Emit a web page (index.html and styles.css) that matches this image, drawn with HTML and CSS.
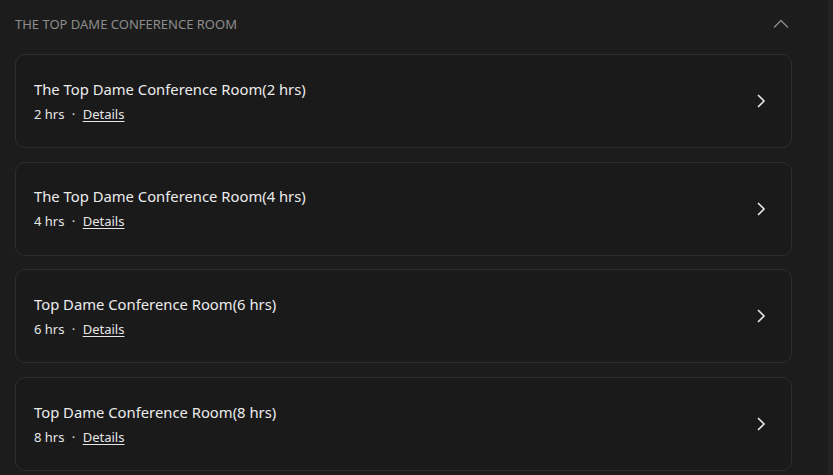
FILE: index.html
```html
<!DOCTYPE html>
<html lang="en">
<head>
  <meta charset="UTF-8">
  <meta name="viewport" content="width=device-width, initial-scale=1.0">
  <title>The Top Dame Conference Room</title>
  <link rel="stylesheet" href="styles.css">
</head>
<body>
  <div class="layout">
    <main class="panel">
      <!-- Section header -->
      <div class="section-header">
        <span class="section-title">THE TOP DAME CONFERENCE ROOM</span>
        <svg class="collapse-icon" width="16" height="10" viewBox="0 0 16 10">
          <path d="M1 8.5 L8 1.5 L15 8.5" fill="none" stroke="#8a8a8a" stroke-width="1.4"/>
        </svg>
      </div>

      <!-- Booking options -->
      <div class="option-list">
        <a class="option-card" href="#">
          <div class="option-text">
            <div class="option-name">The Top Dame Conference Room(2 hrs)</div>
            <div class="option-meta">2 hrs <span class="dot">·</span> <span class="details">Details</span></div>
          </div>
          <svg class="arrow" width="10" height="14" viewBox="0 0 10 14">
            <path d="M2 1 L8 7 L2 13" fill="none" stroke="#e6e6e6" stroke-width="1.6"/>
          </svg>
        </a>
        <a class="option-card" href="#">
          <div class="option-text">
            <div class="option-name">The Top Dame Conference Room(4 hrs)</div>
            <div class="option-meta">4 hrs <span class="dot">·</span> <span class="details">Details</span></div>
          </div>
          <svg class="arrow" width="10" height="14" viewBox="0 0 10 14">
            <path d="M2 1 L8 7 L2 13" fill="none" stroke="#e6e6e6" stroke-width="1.6"/>
          </svg>
        </a>
        <a class="option-card" href="#">
          <div class="option-text">
            <div class="option-name">Top Dame Conference Room(6 hrs)</div>
            <div class="option-meta">6 hrs <span class="dot">·</span> <span class="details">Details</span></div>
          </div>
          <svg class="arrow" width="10" height="14" viewBox="0 0 10 14">
            <path d="M2 1 L8 7 L2 13" fill="none" stroke="#e6e6e6" stroke-width="1.6"/>
          </svg>
        </a>
        <a class="option-card" href="#">
          <div class="option-text">
            <div class="option-name">Top Dame Conference Room(8 hrs)</div>
            <div class="option-meta">8 hrs <span class="dot">·</span> <span class="details">Details</span></div>
          </div>
          <svg class="arrow" width="10" height="14" viewBox="0 0 10 14">
            <path d="M2 1 L8 7 L2 13" fill="none" stroke="#e6e6e6" stroke-width="1.6"/>
          </svg>
        </a>
      </div>
    </main>
    <div class="scroll-strip"></div>
  </div>
</body>
</html>
```
FILE: styles.css
```css
body {
  margin: 0;
  background-color: #1c1c1c;
  font-family: "Noto Sans", "Open Sans", sans-serif;
  color: #e6e6e6;
  height: 475px;
  overflow: hidden;
}

.layout {
  display: flex;
  height: 100%;
}

.panel {
  flex: 1;
  padding: 0 0 0 15px;
}

.scroll-strip {
  width: 5px;
  background-color: #232323;
}

.section-header {
  display: flex;
  align-items: center;
  justify-content: space-between;
  width: 777px;
  height: 48px;
  margin-bottom: 6px;
}

.section-title {
  font-size: 13px;
  color: #8c8c8c;
}

.collapse-icon {
  margin-right: 3px;
}

.option-list {
  display: flex;
  flex-direction: column;
  gap: 13.7px;
  width: 777px;
}

.option-card {
  display: flex;
  align-items: center;
  justify-content: space-between;
  box-sizing: border-box;
  height: 94px;
  padding: 0 25px 0 18px;
  border: 1px solid #2e2e2e;
  border-radius: 10px;
  background-color: #1a1a1a;
  color: inherit;
  text-decoration: none;
}

.option-text {
  display: flex;
  flex-direction: column;
  gap: 3px;
}

.option-name {
  font-size: 14.8px;
  line-height: 22px;
  color: #ececec;
}

.option-meta {
  font-size: 13px;
  line-height: 22px;
  color: #e6e6e6;
}

.dot {
  margin: 0 4px;
}

.details {
  text-decoration: underline;
  text-underline-offset: 2px;
}
```
